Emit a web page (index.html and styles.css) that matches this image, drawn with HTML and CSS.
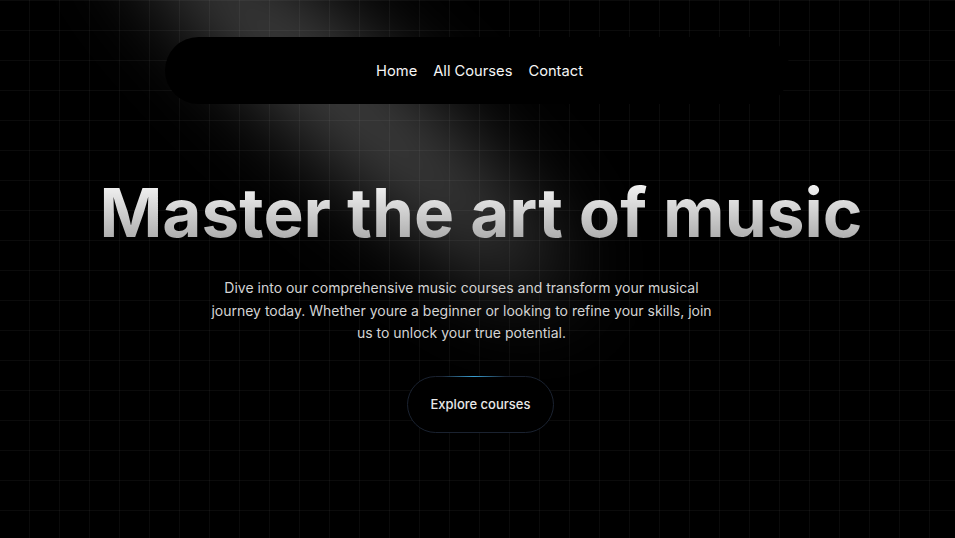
FILE: index.html
```html
<!DOCTYPE html>
<html lang="en">
<head>
<meta charset="utf-8">
<title>Music School</title>
<link rel="stylesheet" href="styles.css">
</head>
<body>
<div class="page">
  <svg class="spotlight" width="955" height="538" viewBox="0 0 955 538" aria-hidden="true">
    <defs>
      <filter id="blur" filterUnits="userSpaceOnUse" x="-400" y="-400" width="1800" height="1400">
        <feGaussianBlur stdDeviation="46"/>
      </filter>
    </defs>
    <g filter="url(#blur)">
      <ellipse cx="340" cy="95" rx="290" ry="50" transform="rotate(42 340 95)" fill="#ffffff" fill-opacity="0.28"/>
    </g>
  </svg>
  <header class="nav-wrap">
    <nav class="nav">
      <a href="#" class="nav-link">Home</a>
      <a href="#" class="nav-link">All Courses</a>
      <a href="#" class="nav-link">Contact</a>
    </nav>
  </header>
  <main class="hero">
    <h1 class="title">Master the art of music</h1>
    <p class="lead">Dive into our comprehensive music courses and transform your musical journey today. Whether youre a beginner or looking to refine your skills, join us to unlock your true potential.</p>
    <a href="#" class="cta"><span class="cta-glow"></span>Explore courses</a>
  </main>
</div>
</body>
</html>
```

FILE: styles.css
```css
* { box-sizing: border-box; }
html, body { margin: 0; padding: 0; background: #000; }
body { font-family: Inter, "Noto Sans", sans-serif; color: #fff; }
.page {
  position: relative;
  width: 955px;
  height: 538px;
  overflow: hidden;
  background-color: #000;
  background-image:
    linear-gradient(to right, rgba(255,255,255,0.045) 1px, transparent 1px),
    linear-gradient(to bottom, rgba(255,255,255,0.045) 1px, transparent 1px);
  background-size: 30px 30px;
  background-position: -1px 0;
  display: flex;
  flex-direction: column;
  align-items: center;
}
.spotlight {
  position: absolute;
  left: 0;
  top: 0;
  pointer-events: none;
  z-index: 0;
}
.nav-wrap {
  position: relative;
  z-index: 1;
  margin-top: 37px;
  width: 625px;
}
.nav {
  height: 67px;
  border-radius: 34px;
  background: #000;
  display: flex;
  justify-content: center;
  align-items: center;
  gap: 16px;
  padding-left: 4px;
}
.nav-link {
  color: #f5f5f5;
  text-decoration: none;
  font-size: 14.7px;
  line-height: 20px;
}
.hero {
  position: relative;
  z-index: 1;
  display: flex;
  flex-direction: column;
  align-items: center;
  margin-top: 75px;
}
.title {
  margin: 0 0 0 7px;
  font-size: 67.5px;
  line-height: 68px;
  font-weight: 700;
  text-align: center;
  background: linear-gradient(to bottom, #fafafa, #a3a3a3);
  -webkit-background-clip: text;
  background-clip: text;
  color: transparent;
}
.lead {
  margin: 30px 32px 0 0;
  max-width: 505px;
  font-size: 14px;
  line-height: 22.5px;
  text-align: center;
  color: #d4d4d4;
}
.cta {
  position: relative;
  margin: 31px 0 0 6px;
  width: 147px;
  height: 57px;
  border-radius: 29px;
  border: 1px solid #1a2230;
  background: #000;
  color: #e8e8e8;
  text-decoration: none;
  font-size: 13px;
  font-weight: 500;
  display: flex;
  align-items: center;
  justify-content: center;
}
.cta-glow {
  position: absolute;
  top: -1px;
  left: 34px;
  width: 64px;
  height: 1px;
  background: linear-gradient(to right, rgba(56,160,210,0), #3aa0d4 50%, rgba(56,160,210,0));
}
```
